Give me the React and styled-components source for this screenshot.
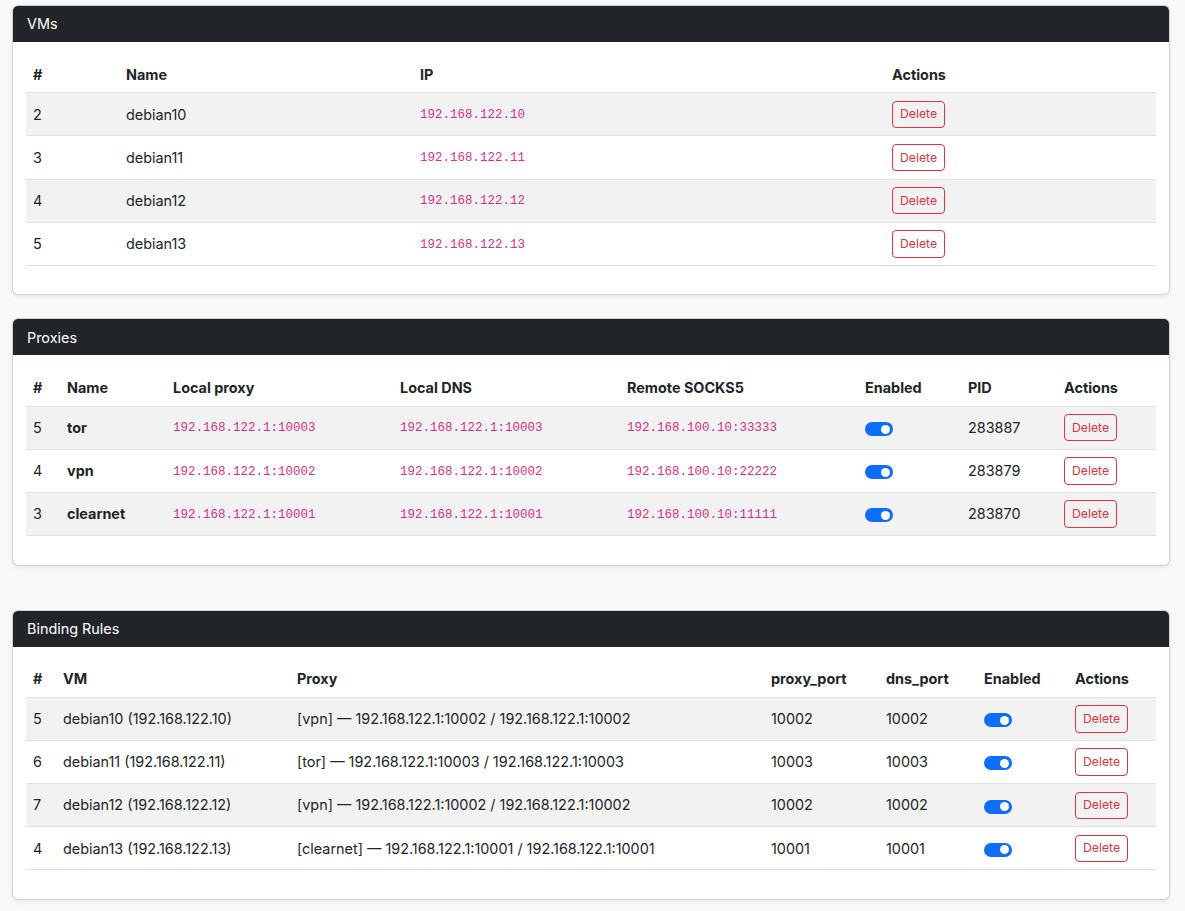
import React from "react";
import styled, { createGlobalStyle } from "styled-components";

const GlobalStyle = createGlobalStyle`
  html, body {
    margin: 0;
    padding: 0;
    background: #f8f9fa;
    color: #212529;
    font-family: Inter, "Noto Sans", "Liberation Sans", sans-serif;
    font-size: 14.4px;
    line-height: 1.5;
  }
  * { box-sizing: border-box; }
`;

const Page = styled.div`
  padding: 5px 15px 10px 12px;
  display: flex;
  flex-direction: column;
`;

const Card = styled.section`
  background: #fff;
  border: 1px solid rgba(0, 0, 0, 0.175);
  border-radius: 6px;
  box-shadow: 0 2px 4px rgba(0, 0, 0, 0.075);
  overflow: hidden;
  margin-top: ${(p) => p.$gap || 0}px;
`;

const CardHeader = styled.div`
  background: #212529;
  color: #fff;
  padding: 7.2px 14px;
  line-height: 21.6px;
  font-size: 14.4px;
`;

const CardBody = styled.div`
  padding: 14.4px 13px 14px 13px;
`;

const Table = styled.table`
  width: 100%;
  border-collapse: collapse;
  table-layout: fixed;
  margin-bottom: 14.4px;
`;

const Th = styled.th`
  text-align: left;
  font-weight: 700;
  padding: 7.2px 7px;
  line-height: 21.6px;
  border-bottom: 1px solid #dee2e6;
  white-space: nowrap;
`;

const Tr = styled.tr`
  background: ${(p) => (p.$striped ? "#f2f2f2" : "#fff")};
`;

const Td = styled.td`
  padding: 7.4px 7px;
  line-height: 21.6px;
  border-bottom: 1px solid #dee2e6;
  vertical-align: middle;
  white-space: nowrap;
  font-weight: ${(p) => (p.$bold ? 700 : 400)};
`;

const Code = styled.code`
  font-family: "Liberation Mono", "DejaVu Sans Mono", monospace;
  font-size: 12.5px;
  color: #d63384;
`;

const DeleteButton = styled.button`
  font-family: inherit;
  font-size: 12.25px;
  line-height: 18px;
  padding: 3.7px 7px;
  color: #dc3545;
  background: transparent;
  border: 1px solid #dc3545;
  border-radius: 4px;
  cursor: pointer;
  display: inline-block;
  vertical-align: middle;
`;

const Switch = styled.span`
  display: inline-block;
  width: 28px;
  height: 14px;
  border-radius: 7px;
  background: #0d6efd;
  position: relative;
  vertical-align: middle;

  &::after {
    content: "";
    position: absolute;
    right: 3px;
    top: 2.5px;
    width: 9px;
    height: 9px;
    border-radius: 50%;
    background: #fff;
  }
`;

const DataTable = ({ cols, rows }) => (
  <Table>
    <colgroup>
      {cols.map((c) => (
        <col key={c.label} style={{ width: c.w }} />
      ))}
    </colgroup>
    <thead>
      <tr>
        {cols.map((c) => (
          <Th key={c.label}>{c.label}</Th>
        ))}
      </tr>
    </thead>
    <tbody>
      {rows.map((r, i) => (
        <Tr key={i} $striped={i % 2 === 0}>
          {r}
        </Tr>
      ))}
    </tbody>
  </Table>
);

const vms = [
  ["2", "debian10", "192.168.122.10"],
  ["3", "debian11", "192.168.122.11"],
  ["4", "debian12", "192.168.122.12"],
  ["5", "debian13", "192.168.122.13"],
];

const proxies = [
  ["5", "tor", "192.168.122.1:10003", "192.168.122.1:10003", "192.168.100.10:33333", "283887"],
  ["4", "vpn", "192.168.122.1:10002", "192.168.122.1:10002", "192.168.100.10:22222", "283879"],
  ["3", "clearnet", "192.168.122.1:10001", "192.168.122.1:10001", "192.168.100.10:11111", "283870"],
];

const rules = [
  ["5", "debian10 (192.168.122.10)", "[vpn] — 192.168.122.1:10002 / 192.168.122.1:10002", "10002", "10002"],
  ["6", "debian11 (192.168.122.11)", "[tor] — 192.168.122.1:10003 / 192.168.122.1:10003", "10003", "10003"],
  ["7", "debian12 (192.168.122.12)", "[vpn] — 192.168.122.1:10002 / 192.168.122.1:10002", "10002", "10002"],
  ["4", "debian13 (192.168.122.13)", "[clearnet] — 192.168.122.1:10001 / 192.168.122.1:10001", "10001", "10001"],
];

const Del = () => (
  <Td>
    <DeleteButton>Delete</DeleteButton>
  </Td>
);

export default function App() {
  return (
    <Page>
      <GlobalStyle />
      <Card>
        <CardHeader>VMs</CardHeader>
        <CardBody>
          <DataTable
            cols={[
              { label: "#", w: 93 },
              { label: "Name", w: 294 },
              { label: "IP", w: 472 },
              { label: "Actions", w: 271 },
            ]}
            rows={vms.map((v) => (
              <>
                <Td>{v[0]}</Td>
                <Td>{v[1]}</Td>
                <Td>
                  <Code>{v[2]}</Code>
                </Td>
                <Del />
              </>
            ))}
          />
        </CardBody>
      </Card>

      <Card $gap={23}>
        <CardHeader>Proxies</CardHeader>
        <CardBody>
          <DataTable
            cols={[
              { label: "#", w: 34 },
              { label: "Name", w: 106 },
              { label: "Local proxy", w: 227 },
              { label: "Local DNS", w: 227 },
              { label: "Remote SOCKS5", w: 238 },
              { label: "Enabled", w: 103 },
              { label: "PID", w: 96 },
              { label: "Actions", w: 99 },
            ]}
            rows={proxies.map((p) => (
              <>
                <Td>{p[0]}</Td>
                <Td $bold>{p[1]}</Td>
                <Td>
                  <Code>{p[2]}</Code>
                </Td>
                <Td>
                  <Code>{p[3]}</Code>
                </Td>
                <Td>
                  <Code>{p[4]}</Code>
                </Td>
                <Td>
                  <Switch />
                </Td>
                <Td>{p[5]}</Td>
                <Del />
              </>
            ))}
          />
        </CardBody>
      </Card>

      <Card $gap={44}>
        <CardHeader>Binding Rules</CardHeader>
        <CardBody>
          <DataTable
            cols={[
              { label: "#", w: 30 },
              { label: "VM", w: 234 },
              { label: "Proxy", w: 474 },
              { label: "proxy_port", w: 115 },
              { label: "dns_port", w: 98 },
              { label: "Enabled", w: 91 },
              { label: "Actions", w: 88 },
            ]}
            rows={rules.map((r) => (
              <>
                <Td>{r[0]}</Td>
                <Td>{r[1]}</Td>
                <Td>{r[2]}</Td>
                <Td>{r[3]}</Td>
                <Td>{r[4]}</Td>
                <Td>
                  <Switch />
                </Td>
                <Del />
              </>
            ))}
          />
        </CardBody>
      </Card>
    </Page>
  );
}
